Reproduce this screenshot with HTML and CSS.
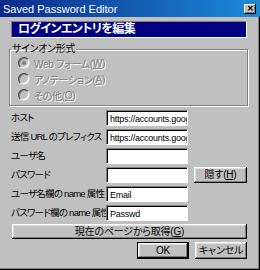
FILE: index.html
```html
<!DOCTYPE html>
<html lang="ja">
<head>
    <meta charset="UTF-8">
    <title>Saved Password Editor</title>
    <link rel="stylesheet" href="styles.css">
</head>
<body>
    <div class="window">
        <div class="titlebar">
            <span class="title">Saved Password Editor</span>
            <span class="close">&#x2715;</span>
        </div>

        <div class="dialog">
            <div class="heading">ログインエントリを編集</div>

            <!-- サインオン形式 -->
            <fieldset class="group">
                <legend>サインオン形式</legend>
                <label class="radio"><span class="dot checked"></span>Web フォーム(<u>W</u>)</label>
                <label class="radio"><span class="dot"></span>アノテーション(<u>A</u>)</label>
                <label class="radio"><span class="dot"></span>その他(<u>O</u>)</label>
            </fieldset>

            <div class="fields">
                <span class="label">ホスト</span>
                <span class="input">https://accounts.google.com</span>
                <span></span>

                <span class="label">送信 URL のプレフィクス</span>
                <span class="input">https://accounts.google.com</span>
                <span></span>

                <span class="label">ユーザ名</span>
                <span class="input"></span>
                <span></span>

                <span class="label">パスワード</span>
                <span class="input"></span>
                <button class="btn hide">隠す(<u>H</u>)</button>

                <span class="label">ユーザ名欄の name 属性</span>
                <span class="input">Email</span>
                <span></span>

                <span class="label">パスワード欄の name 属性</span>
                <span class="input">Passwd</span>
                <span></span>
            </div>

            <button class="btn fetch">現在のページから取得(<u>G</u>)</button>

            <div class="actions">
                <button class="btn default">OK</button>
                <button class="btn">キャンセル</button>
            </div>
        </div>
    </div>
</body>
</html>
```

FILE: styles.css
```css
body {
    margin: 0;
    font-family: "Liberation Sans", "Noto Sans CJK JP", sans-serif;
    font-size: 10px;
    font-feature-settings: "palt";
    letter-spacing: -0.3px;
    color: #000;
}
.window {
    width: 260px;
    height: 270px;
    box-sizing: border-box;
    background-color: #c0c0c0;
    box-shadow: inset -1px -1px #000, inset -2px -2px #808080;
    overflow: hidden;
}
.titlebar {
    height: 17px;
    display: flex;
    align-items: center;
    justify-content: space-between;
    padding: 0 4px 0 3px;
    background: linear-gradient(to right, #0a2a8a, #1d8ad8);
    color: white;
    font-size: 11px;
    letter-spacing: 0;
}
.close {
    width: 12px;
    height: 10px;
    background-color: #c0c0c0;
    color: #000;
    font-size: 8px;
    font-weight: bold;
    line-height: 10px;
    text-align: center;
    box-shadow: inset -1px -1px #000, inset 1px 1px #fff, inset -2px -2px #808080;
}
.dialog {
    padding: 4px 13px 0 11px;
}
.heading {
    height: 15px;
    background-color: #000080;
    border: 1px solid;
    border-color: #808080 #fff #fff #808080;
    color: white;
    font-size: 12px;
    font-weight: bold;
    line-height: 15px;
    padding-left: 6px;
    letter-spacing: -0.6px;
}
.group {
    margin: 5px -1px 0 -2px;
    padding: 0 0 2px 8px;
    border: 1px solid #808080;
    box-shadow: inset 1px 1px #fff, 1px 1px #fff;
}
.group legend {
    padding: 0 1px;
    margin-left: -7px;
    line-height: 12px;
}
.radio {
    display: flex;
    align-items: center;
    height: 16px;
    color: #808080;
    text-shadow: 1px 1px #fff;
}
.dot {
    width: 10px;
    height: 10px;
    border-radius: 50%;
    background-color: #c0c0c0;
    box-shadow: inset 1px 1px #808080, inset -1px -1px #fff;
    border: 1px solid;
    border-color: #404040 #dfdfdf #dfdfdf #404040;
    margin-right: 4px;
    position: relative;
    flex: none;
}
.dot.checked::after {
    content: "";
    position: absolute;
    left: 3px;
    top: 3px;
    width: 4px;
    height: 4px;
    border-radius: 50%;
    background-color: #808080;
}
.fields {
    display: grid;
    grid-template-columns: 95px 82px 1fr;
    grid-auto-rows: 16px;
    row-gap: 3px;
    margin-top: 4px;
    align-items: center;
}
.label {
    white-space: nowrap;
    font-size: 9.5px;
    line-height: 13px;
    letter-spacing: -0.75px;
    margin-top: -2px;
}
.input {
    height: 16px;
    box-sizing: border-box;
    background-color: white;
    border: 1px solid;
    border-color: #808080 #fff #fff #808080;
    box-shadow: inset 1px 1px #000;
    padding: 2px 0 0 3px;
    overflow: hidden;
    white-space: nowrap;
    font-size: 9px;
    letter-spacing: -0.25px;
    line-height: 12px;
}
.btn {
    display: block;
    height: 16px;
    padding: 0;
    border: none;
    background-color: #c0c0c0;
    box-shadow: inset -1px -1px #000, inset 1px 1px #fff, inset -2px -2px #808080, inset 2px 2px #dfdfdf;
    font-family: "Liberation Sans", "Noto Sans CJK JP", sans-serif;
    font-feature-settings: "palt";
    font-size: 10px;
    letter-spacing: -0.2px;
    line-height: 15px;
    white-space: nowrap;
    color: #000;
}
.hide {
    width: 53px;
    margin-left: 6px;
    margin-top: -1px;
}
.fetch {
    width: 235px;
    height: 15px;
    line-height: 14px;
    margin-top: 3px;
    margin-left: 1px;
}
.actions {
    display: flex;
    justify-content: flex-end;
    gap: 6px;
    margin-top: 3px;
}
.actions .btn {
    width: 52px;
    height: 17px;
}
.btn.default {
    outline: 1px solid #000;
    outline-offset: -1px;
    box-shadow: inset -2px -2px #000, inset 2px 2px #fff, inset -3px -3px #808080, inset 3px 3px #dfdfdf;
}
```
